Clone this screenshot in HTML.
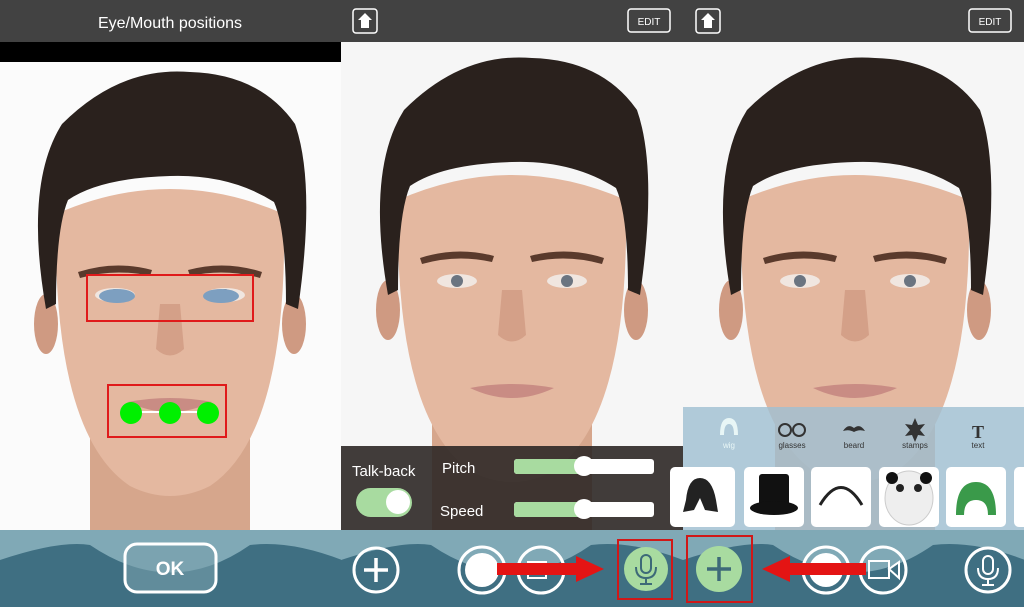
<!DOCTYPE html>
<html><head><meta charset="utf-8"><style>
body{margin:0;width:1024px;height:607px;overflow:hidden;background:#f5f5f5;font-family:"Liberation Sans",sans-serif}
svg{position:absolute;left:0;top:0}
</style></head><body>
<svg width="1024" height="607" viewBox="0 0 1024 607">
<defs>
<g id="face">
 <rect x="-80" y="420" width="160" height="130" fill="#d6a68c"/>
 <ellipse cx="-124" cy="310" rx="12" ry="30" fill="#cf9a82"/>
 <ellipse cx="124" cy="310" rx="12" ry="30" fill="#cf9a82"/>
 <path d="M-114,200 Q-118,420 -40,472 Q0,492 40,472 Q118,420 114,200 Q0,150 -114,200Z" fill="#e4b8a0"/>
 <path d="M-124,295 Q-146,170 -108,110 Q-50,52 20,58 Q90,60 125,110 Q146,170 128,295 L116,290 Q116,215 104,188 Q60,160 0,162 Q-70,164 -102,186 Q-114,215 -114,290Z" fill="#2a211d"/>
 <path d="M-92,258 Q-55,246 -18,256 L-20,262 Q-55,254 -90,264Z" fill="#5a3a2c"/>
 <path d="M92,258 Q55,246 18,256 L20,262 Q55,254 90,264Z" fill="#5a3a2c"/>
 <ellipse cx="-55" cy="281" rx="20" ry="7" fill="#f0e6e0"/><circle cx="-55" cy="281" r="6" fill="#6b7480"/>
 <ellipse cx="55" cy="281" rx="20" ry="7" fill="#f0e6e0"/><circle cx="55" cy="281" r="6" fill="#6b7480"/>
 <path d="M-10,290 L-14,335 Q0,348 14,335 L10,290" fill="#d4a088"/>
 <path d="M-42,388 Q0,380 42,388 Q0,408 -42,388Z" fill="#c98c84"/>
</g>
<g id="bar">
 <rect x="0" y="530" width="342" height="77" fill="#80a9b6"/>
 <path d="M0,560 Q60,540 90,545 Q171,600 250,545 Q290,540 342,560 L342,607 L0,607Z" fill="#3f6f82"/>
</g>
</defs>
<rect x="0" y="0" width="1024" height="42" fill="#424242"/>
<rect x="0" y="42" width="341" height="20" fill="#000"/>
<rect x="0" y="62" width="341" height="468" fill="#fbfbfb"/>
<rect x="341" y="42" width="683" height="488" fill="#f6f6f6"/>
<use href="#face" transform="translate(170,14)"/>
<use href="#face" transform="translate(512,0)"/>
<use href="#face" transform="translate(855,0)"/>
<use href="#bar"/>
<use href="#bar" transform="translate(341,0)"/>
<use href="#bar" transform="translate(683,0)"/>
<text x="170" y="28" fill="#fff" font-size="16" text-anchor="middle">Eye/Mouth positions</text>
<rect x="353" y="9" width="24" height="24" rx="3" fill="none" stroke="#fff" stroke-width="1.5"/>
<path d="M365,13 L372,20 L369,20 L369,28 L361,28 L361,20 L358,20Z" fill="#fff"/>
<rect x="628" y="9" width="42" height="23" rx="3" fill="none" stroke="#fff" stroke-width="1.5"/>
<text x="649" y="25" fill="#fff" font-size="10" text-anchor="middle">EDIT</text>
<rect x="696" y="9" width="24" height="24" rx="3" fill="none" stroke="#fff" stroke-width="1.5"/>
<path d="M708,13 L715,20 L712,20 L712,28 L704,28 L704,20 L701,20Z" fill="#fff"/>
<rect x="969" y="9" width="42" height="23" rx="3" fill="none" stroke="#fff" stroke-width="1.5"/>
<text x="990" y="25" fill="#fff" font-size="10" text-anchor="middle">EDIT</text>
<rect x="87" y="275" width="166" height="46" fill="none" stroke="#e01a1a" stroke-width="2"/>
<ellipse cx="117" cy="296" rx="18" ry="7" fill="#7d9fc0"/><ellipse cx="221" cy="296" rx="18" ry="7" fill="#7d9fc0"/>
<rect x="108" y="385" width="118" height="52" fill="none" stroke="#e01a1a" stroke-width="2"/>
<line x1="131" y1="412" x2="207" y2="412" stroke="#fff" stroke-width="2"/>
<circle cx="131" cy="413" r="11" fill="#00f000"/><circle cx="170" cy="413" r="11" fill="#00f000"/><circle cx="208" cy="413" r="11" fill="#00f000"/>
<rect x="125" y="544" width="91" height="48" rx="12" fill="rgba(120,160,172,.6)" stroke="#fff" stroke-width="3"/>
<text x="170" y="575" fill="#fff" font-size="19" font-weight="bold" text-anchor="middle">OK</text>
<rect x="341" y="446" width="342" height="84" fill="rgba(45,40,38,.9)"/>
<text x="352" y="476" fill="#fff" font-size="15">Talk-back</text>
<rect x="356" y="488" width="56" height="29" rx="14.5" fill="#a8dba0"/><circle cx="398" cy="502" r="12" fill="#fff"/>
<text x="442" y="473" fill="#fff" font-size="15">Pitch</text>
<text x="440" y="516" fill="#fff" font-size="15">Speed</text>
<rect x="514" y="459" width="140" height="15" rx="3" fill="#fff"/><rect x="514" y="459" width="70" height="15" rx="3" fill="#a8dba0"/><circle cx="584" cy="466" r="10" fill="#fff"/>
<rect x="514" y="502" width="140" height="15" rx="3" fill="#fff"/><rect x="514" y="502" width="70" height="15" rx="3" fill="#a8dba0"/><circle cx="584" cy="509" r="10" fill="#fff"/>
<rect x="683" y="407" width="341" height="123" fill="rgba(160,192,210,.82)"/>
<path d="M720,435 Q720,418 729,418 Q738,418 738,435 L734,435 Q734,424 729,424 Q724,424 724,435Z" fill="#e8f6f6"/>
<text x="729" y="448" fill="#e8f6f6" font-size="8" text-anchor="middle">wig</text>
<circle cx="785" cy="430" r="6" fill="none" stroke="#333" stroke-width="2"/><circle cx="799" cy="430" r="6" fill="none" stroke="#333" stroke-width="2"/>
<text x="792" y="448" fill="#333" font-size="8" text-anchor="middle">glasses</text>
<path d="M843,431 Q848,423 854,428 Q860,423 865,431 Q859,429 854,432 Q849,429 843,431Z" fill="#333"/>
<text x="854" y="448" fill="#333" font-size="8" text-anchor="middle">beard</text>
<path d="M915,418 L918,425 L925,424 L920,430 L925,436 L918,435 L915,442 L912,435 L905,436 L910,430 L905,424 L912,425Z" fill="#333"/>
<text x="915" y="448" fill="#333" font-size="8" text-anchor="middle">stamps</text>
<text x="978" y="438" fill="#333" font-size="18" font-weight="bold" text-anchor="middle" font-family="Liberation Serif">T</text>
<text x="978" y="448" fill="#333" font-size="8" text-anchor="middle">text</text>
<rect x="670" y="467" width="65" height="60" rx="5" fill="#fff"/>
<path d="M686,500 Q688,478 700,478 Q712,478 716,500 L718,512 L705,510 L700,498 L694,510 L683,512Z" fill="#222"/>
<rect x="744" y="467" width="60" height="60" rx="5" fill="#fff"/>
<rect x="759" y="474" width="30" height="32" rx="3" fill="#111"/><ellipse cx="774" cy="508" rx="24" ry="7" fill="#111"/>
<rect x="811" y="467" width="60" height="60" rx="5" fill="#fff"/>
<path d="M820,505 Q841,470 862,505" fill="none" stroke="#222" stroke-width="3"/>
<rect x="879" y="467" width="60" height="60" rx="5" fill="#fff"/>
<ellipse cx="909" cy="498" rx="24" ry="27" fill="#eee" stroke="#ccc"/><circle cx="892" cy="478" r="6" fill="#111"/><circle cx="926" cy="478" r="6" fill="#111"/><circle cx="900" cy="488" r="4" fill="#222"/><circle cx="918" cy="488" r="4" fill="#222"/>
<rect x="946" y="467" width="60" height="60" rx="5" fill="#fff"/>
<path d="M956,515 Q956,482 976,482 Q996,482 996,515 L988,515 Q988,500 976,500 Q964,500 964,515Z" fill="#3a9a4a"/>
<rect x="1014" y="467" width="20" height="60" rx="5" fill="#fff"/>
<circle cx="376" cy="570" r="22" fill="none" stroke="#fff" stroke-width="3"/>
<path d="M376,558 V582 M364,570 H388" stroke="#fff" stroke-width="3.5"/>
<circle cx="482" cy="570" r="23" fill="none" stroke="#fff" stroke-width="3"/><circle cx="482" cy="570" r="17" fill="#fff"/>
<circle cx="541" cy="570" r="23" fill="none" stroke="#fff" stroke-width="3"/>
<rect x="528" y="562" width="18" height="16" fill="none" stroke="#fff" stroke-width="2"/>
<circle cx="646" cy="569" r="22" fill="#a8dba0"/>
<rect x="641" y="555" width="10" height="18" rx="5" fill="none" stroke="#3d6a78" stroke-width="2"/>
<path d="M636,567 Q636,578 646,578 Q656,578 656,567 M646,578 V584 M640,584 H652" fill="none" stroke="#3d6a78" stroke-width="2"/>
<rect x="618" y="540" width="54" height="59" fill="none" stroke="#d01818" stroke-width="2"/>
<path d="M497,563 H576 V556 L604,569 L576,582 V575 H497Z" fill="#e41414"/>
<rect x="687" y="536" width="65" height="66" fill="none" stroke="#d01818" stroke-width="2"/>
<circle cx="719" cy="569" r="23" fill="#a8dba0"/>
<path d="M719,557 V581 M707,569 H731" stroke="#3d6a78" stroke-width="3.5"/>
<circle cx="826" cy="570" r="23" fill="none" stroke="#fff" stroke-width="3"/><circle cx="826" cy="570" r="17" fill="#fff"/>
<circle cx="883" cy="570" r="23" fill="none" stroke="#fff" stroke-width="3"/>
<rect x="869" y="561" width="20" height="17" fill="none" stroke="#fff" stroke-width="2"/><path d="M889,569 L899,562 V578Z" fill="none" stroke="#fff" stroke-width="2"/>
<path d="M866,563 H790 V556 L762,569 L790,582 V575 H866Z" fill="#e41414"/>
<circle cx="988" cy="570" r="22" fill="none" stroke="#fff" stroke-width="3"/>
<rect x="983" y="556" width="10" height="18" rx="5" fill="none" stroke="#fff" stroke-width="2"/>
<path d="M978,568 Q978,579 988,579 Q998,579 998,568 M988,579 V585 M982,585 H994" fill="none" stroke="#fff" stroke-width="2"/>
</svg>
</body></html>
